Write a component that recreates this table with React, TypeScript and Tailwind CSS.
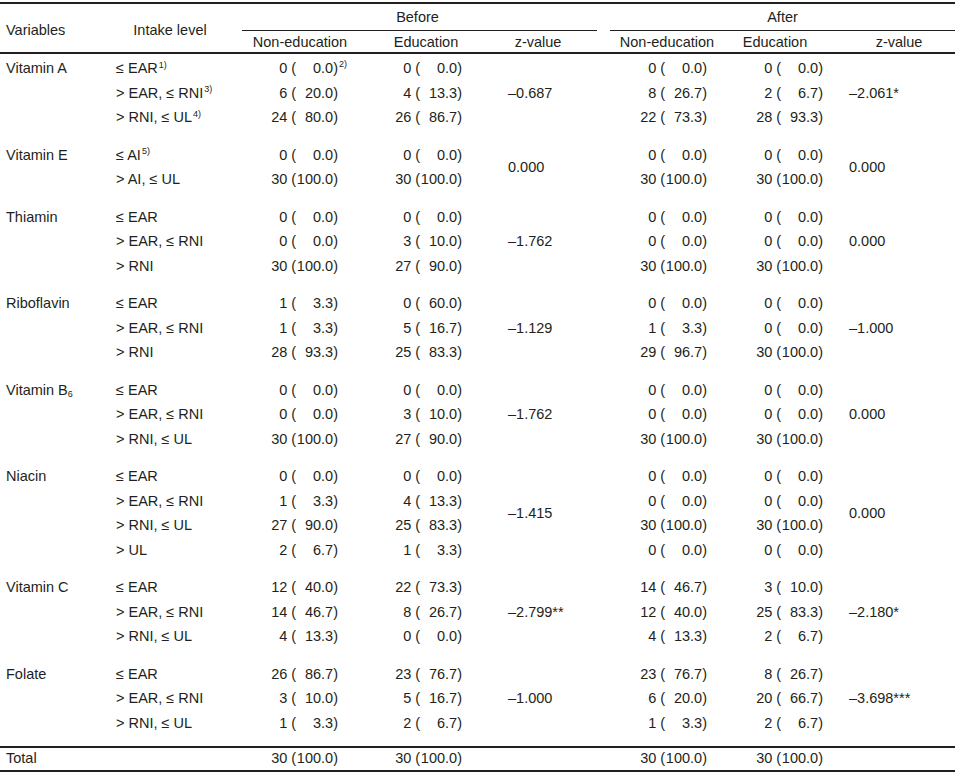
import React from 'react';

type Cnt = [number, string];

interface Group {
  name: React.ReactNode;
  levels: React.ReactNode[];
  before: [Cnt, Cnt][];
  after: [Cnt, Cnt][];
  zBefore: string;
  zAfter: string;
}

const sup = (t: string) => <sup className="text-[9px] ml-[1px]">{t}</sup>;

const groups: Group[] = [
  {
    name: 'Vitamin A',
    levels: [
      <>≤ EAR{sup('1)')}</>,
      <>&gt; EAR, ≤ RNI{sup('3)')}</>,
      <>&gt; RNI, ≤ UL{sup('4)')}</>,
    ],
    before: [[[0, '0.0'], [0, '0.0']], [[6, '20.0'], [4, '13.3']], [[24, '80.0'], [26, '86.7']]],
    after: [[[0, '0.0'], [0, '0.0']], [[8, '26.7'], [2, '6.7']], [[22, '73.3'], [28, '93.3']]],
    zBefore: '–0.687',
    zAfter: '–2.061*',
  },
  {
    name: 'Vitamin E',
    levels: [<>≤ AI{sup('5)')}</>, <>&gt; AI, ≤ UL</>],
    before: [[[0, '0.0'], [0, '0.0']], [[30, '100.0'], [30, '100.0']]],
    after: [[[0, '0.0'], [0, '0.0']], [[30, '100.0'], [30, '100.0']]],
    zBefore: '0.000',
    zAfter: '0.000',
  },
  {
    name: 'Thiamin',
    levels: ['≤ EAR', '> EAR, ≤ RNI', '> RNI'],
    before: [[[0, '0.0'], [0, '0.0']], [[0, '0.0'], [3, '10.0']], [[30, '100.0'], [27, '90.0']]],
    after: [[[0, '0.0'], [0, '0.0']], [[0, '0.0'], [0, '0.0']], [[30, '100.0'], [30, '100.0']]],
    zBefore: '–1.762',
    zAfter: '0.000',
  },
  {
    name: 'Riboflavin',
    levels: ['≤ EAR', '> EAR, ≤ RNI', '> RNI'],
    before: [[[1, '3.3'], [0, '60.0']], [[1, '3.3'], [5, '16.7']], [[28, '93.3'], [25, '83.3']]],
    after: [[[0, '0.0'], [0, '0.0']], [[1, '3.3'], [0, '0.0']], [[29, '96.7'], [30, '100.0']]],
    zBefore: '–1.129',
    zAfter: '–1.000',
  },
  {
    name: <>Vitamin B<sub className="text-[9px] top-[3px]">6</sub></>,
    levels: ['≤ EAR', '> EAR, ≤ RNI', '> RNI, ≤ UL'],
    before: [[[0, '0.0'], [0, '0.0']], [[0, '0.0'], [3, '10.0']], [[30, '100.0'], [27, '90.0']]],
    after: [[[0, '0.0'], [0, '0.0']], [[0, '0.0'], [0, '0.0']], [[30, '100.0'], [30, '100.0']]],
    zBefore: '–1.762',
    zAfter: '0.000',
  },
  {
    name: 'Niacin',
    levels: ['≤ EAR', '> EAR, ≤ RNI', '> RNI, ≤ UL', '> UL'],
    before: [
      [[0, '0.0'], [0, '0.0']],
      [[1, '3.3'], [4, '13.3']],
      [[27, '90.0'], [25, '83.3']],
      [[2, '6.7'], [1, '3.3']],
    ],
    after: [
      [[0, '0.0'], [0, '0.0']],
      [[0, '0.0'], [0, '0.0']],
      [[30, '100.0'], [30, '100.0']],
      [[0, '0.0'], [0, '0.0']],
    ],
    zBefore: '–1.415',
    zAfter: '0.000',
  },
  {
    name: 'Vitamin C',
    levels: ['≤ EAR', '> EAR, ≤ RNI', '> RNI, ≤ UL'],
    before: [[[12, '40.0'], [22, '73.3']], [[14, '46.7'], [8, '26.7']], [[4, '13.3'], [0, '0.0']]],
    after: [[[14, '46.7'], [3, '10.0']], [[12, '40.0'], [25, '83.3']], [[4, '13.3'], [2, '6.7']]],
    zBefore: '–2.799**',
    zAfter: '–2.180*',
  },
  {
    name: 'Folate',
    levels: ['≤ EAR', '> EAR, ≤ RNI', '> RNI, ≤ UL'],
    before: [[[26, '86.7'], [23, '76.7']], [[3, '10.0'], [5, '16.7']], [[1, '3.3'], [2, '6.7']]],
    after: [[[23, '76.7'], [8, '26.7']], [[6, '20.0'], [20, '66.7']], [[1, '3.3'], [2, '6.7']]],
    zBefore: '–1.000',
    zAfter: '–3.698***',
  },
];

function Count({ c, note }: { c: Cnt; note?: string }) {
  return (
    <span className="relative inline-flex items-center justify-end tabular-nums">
      <span>{c[0]}</span>
      <span className="ml-[4px]">(</span>
      <span className="w-[37px] text-right">{c[1]}</span>
      <span>)</span>
      {note && <sup className="absolute left-full top-[6px] ml-[1px] text-[9px]">{note}</sup>}
    </span>
  );
}

const row = 'h-[24.5px] flex items-center whitespace-nowrap';

export default function App() {
  return (
    <div
      className="w-[962px] h-[778px] bg-white text-[#231f20] text-[14.5px] pt-[2px]"
      style={{ fontFamily: '"Liberation Sans", Arial, sans-serif' }}
    >
      <div className="w-[955px]">
        {/* header */}
        <div className="border-t-2 border-b-2 border-[#231f20] grid grid-cols-[110px_132px_120px_128px_107px_13px_117px_108px_120px] grid-rows-[27px_21px]">
          <div className="row-span-2 flex items-center pl-[6px] pt-[5px]">Variables</div>
          <div className="row-span-2 flex items-center justify-center pr-[12px] pt-[5px]">Intake level</div>
          <div className="col-span-3 border-b border-[#231f20] flex items-center justify-center pr-[4px] pt-[2px]">Before</div>
          <div />
          <div className="col-span-3 border-b border-[#231f20] flex items-center justify-center pt-[2px]">After</div>
          <div className="flex items-center justify-center pr-[4px] pt-[3px]">Non-education</div>
          <div className="flex items-center justify-center pt-[3px]">Education</div>
          <div className="flex items-center justify-center pr-[11px] pt-[3px]">z-value</div>
          <div />
          <div className="flex items-center justify-center pr-[3px] pt-[3px]">Non-education</div>
          <div className="flex items-center justify-center pr-[12px] pt-[3px]">Education</div>
          <div className="flex items-center justify-center pl-[8px] pt-[3px]">z-value</div>
        </div>

        {/* body */}
        {groups.map((g, gi) => (
          <div key={gi} className="flex pt-[3px] pb-[10px]">
            <div className="w-[110px] pl-[6px]">
              <div className={row}>{g.name}</div>
            </div>
            <div className="w-[132px] pl-[6px]">
              {g.levels.map((l, i) => (
                <div key={i} className={row}>{l}</div>
              ))}
            </div>
            <div className="w-[120px] pr-[24px]">
              {g.before.map((r, i) => (
                <div key={i} className={`${row} justify-end`}>
                  <Count c={r[0]} note={gi === 0 && i === 0 ? '2)' : undefined} />
                </div>
              ))}
            </div>
            <div className="w-[128px] pr-[28px]">
              {g.before.map((r, i) => (
                <div key={i} className={`${row} justify-end`}>
                  <Count c={r[1]} />
                </div>
              ))}
            </div>
            <div className="w-[107px] pl-[18px] flex items-center">{g.zBefore}</div>
            <div className="w-[13px]" />
            <div className="w-[117px] pr-[20px]">
              {g.after.map((r, i) => (
                <div key={i} className={`${row} justify-end`}>
                  <Count c={r[0]} />
                </div>
              ))}
            </div>
            <div className="w-[108px] pr-[12px]">
              {g.after.map((r, i) => (
                <div key={i} className={`${row} justify-end`}>
                  <Count c={r[1]} />
                </div>
              ))}
            </div>
            <div className="w-[120px] pl-[14px] flex items-center">{g.zAfter}</div>
          </div>
        ))}

        {/* total */}
        <div className="flex border-t-2 border-b-2 border-[#231f20] h-[26px] items-center">
          <div className="w-[110px] pl-[6px]">Total</div>
          <div className="w-[132px]" />
          <div className="w-[120px] pr-[24px] flex justify-end">
            <Count c={[30, '100.0']} />
          </div>
          <div className="w-[128px] pr-[28px] flex justify-end">
            <Count c={[30, '100.0']} />
          </div>
          <div className="w-[107px]" />
          <div className="w-[13px]" />
          <div className="w-[117px] pr-[20px] flex justify-end">
            <Count c={[30, '100.0']} />
          </div>
          <div className="w-[108px] pr-[12px] flex justify-end">
            <Count c={[30, '100.0']} />
          </div>
          <div className="w-[120px]" />
        </div>
      </div>
    </div>
  );
}
